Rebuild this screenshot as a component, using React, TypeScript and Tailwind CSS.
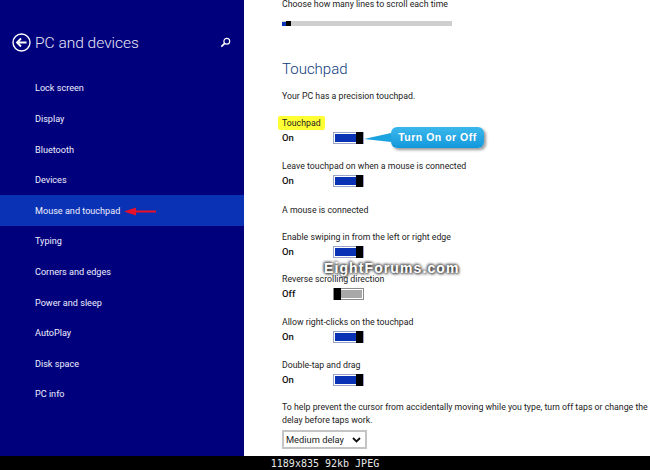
import React from 'react';

const navItems = [
  'Lock screen',
  'Display',
  'Bluetooth',
  'Devices',
  'Mouse and touchpad',
  'Typing',
  'Corners and edges',
  'Power and sleep',
  'AutoPlay',
  'Disk space',
  'PC info',
];

const Toggle: React.FC<{ on: boolean }> = ({ on }) =>
  on ? (
    <div className="flex h-[12px] w-[31px] items-stretch border border-[#9aa3c8] bg-white p-px pr-0">
      <div className="flex-1 bg-[#0a32b4]" />
      <div className="-my-[2px] w-[7px] bg-black" />
    </div>
  ) : (
    <div className="flex h-[12px] w-[31px] items-stretch border border-[#8a8a8a] bg-white p-px pl-0">
      <div className="-my-[2px] w-[7px] bg-black" />
      <div className="flex-1 bg-[#a8a8a8]" />
    </div>
  );

const Setting: React.FC<{ label: React.ReactNode; on: boolean; className: string }> = ({ label, on, className }) => (
  <div className={className}>
    <div className="h-[14px] leading-[14px]">{label}</div>
    <div className="mt-px flex h-[14px] items-center">
      <span className="w-[51px] text-[9.5px] font-medium text-[#111]">{on ? 'On' : 'Off'}</span>
      <Toggle on={on} />
    </div>
  </div>
);

export default function App() {
  return (
    <div className="relative flex h-[470px] w-[650px] flex-col overflow-hidden bg-white font-['Roboto',sans-serif]">
      <div className="flex min-h-0 flex-1">
        <aside className="w-[244px] shrink-0 bg-[#00007c] text-white">
          <div className="flex h-[73px] items-start pl-[12px] pr-[12px] pt-[33px]">
            <svg width="19" height="19" viewBox="0 0 19 19" fill="none" stroke="white" className="shrink-0">
              <circle cx="9.5" cy="9.5" r="8.5" strokeWidth="1.4" />
              <path d="M14.5 9.5H5.5M9 5.5L5 9.5L9 13.5" strokeWidth="1.8" />
            </svg>
            <h1 className="ml-[4px] flex-1 text-[15.5px] font-light leading-[21px] text-[#e8e8f8]">PC and devices</h1>
            <svg width="11" height="11" viewBox="0 0 11 11" fill="none" stroke="white" className="mt-[4px] mr-[1px]">
              <circle cx="6.8" cy="4.2" r="2.9" strokeWidth="1.2" />
              <path d="M4.7 6.3L1.3 9.7" strokeWidth="1.7" />
            </svg>
          </div>
          <nav>
            {navItems.map((item) => (
              <div
                key={item}
                className={`flex h-[30.6px] items-center gap-[4px] pl-[35px] pt-[2px] text-[9.1px] text-[#eef] ${
                  item === 'Mouse and touchpad' ? 'bg-[#0a32b4]' : ''
                }`}
              >
                {item}
                {item === 'Mouse and touchpad' && (
                  <svg width="33" height="9" viewBox="0 0 33 9" className="shrink-0">
                    <path d="M0 4.5L12 0.5V3.5H32V5.5H12V8.5Z" fill="#e8102a" />
                  </svg>
                )}
              </div>
            ))}
          </nav>
        </aside>

        <main className="min-w-0 flex-1 pl-[38px] text-[8.75px] text-[#222]">
          <div className="-mt-[3px] h-[14px] leading-[14px]">Choose how many lines to scroll each time</div>
          <div className="mt-[10px] flex h-[5px] w-[170px] items-center bg-[#cfcfcf]">
            <div className="h-[4px] w-[4px] bg-[#0a32b4]" />
            <div className="h-[5px] w-[5px] bg-black" />
          </div>
          <h2 className="mt-[32px] h-[22px] text-[15px] font-light leading-[22px] text-[#0f3a80]">Touchpad</h2>
          <div className="mt-[9px] h-[14px] leading-[14px]">Your PC has a precision touchpad.</div>
          <Setting
            label={<span className="-ml-[4px] inline-block h-[14px] rounded-[2px] bg-[#ffff33] px-[4px]">Touchpad</span>}
            on
            className="mt-[13px]"
          />
          <Setting label="Leave touchpad on when a mouse is connected" on className="mt-[14px]" />
          <div className="mt-[15px] h-[14px] leading-[14px]">A mouse is connected</div>
          <Setting label="Enable swiping in from the left or right edge" on className="mt-[13px]" />
          <Setting label="Reverse scrolling direction" on={false} className="mt-[13px]" />
          <Setting label="Allow right-clicks on the touchpad" on className="mt-[14px]" />
          <Setting label="Double-tap and drag" on className="mt-[14px]" />
          <p className="mt-[14px] whitespace-nowrap leading-[13px]">
            To help prevent the cursor from accidentally moving while you type, turn off taps or change the
            <br />
            delay before taps work.
          </p>
          <div className="mt-[3px] flex h-[19px] w-[85px] items-center justify-between border-2 border-[#c4c4c4] pl-[2px] pr-[4px] text-[9.3px]">
            <span>Medium delay</span>
            <svg width="9" height="6" viewBox="0 0 9 6" fill="none" stroke="#111" strokeWidth="1.8">
              <path d="M1 1L4.5 4.5L8 1" />
            </svg>
          </div>
        </main>
      </div>

      <footer className="flex h-[14px] shrink-0 items-center justify-center bg-black font-['DejaVu_Sans_Mono',monospace] text-[10px] text-[#e8e8e8]">
        1189x835 92kb JPEG
      </footer>

      {/* callout annotation */}
      <div className="absolute left-[364px] top-[127px] flex items-center">
        <svg width="27" height="10" viewBox="0 0 27 10">
          <path d="M0 6L27 0V9Z" fill="#1ba3e0" />
        </svg>
        <div className="flex h-[21px] w-[93px] items-center justify-center rounded-[6px] bg-gradient-to-b from-[#3ab8ec] to-[#0f98dc] font-['Liberation_Sans',sans-serif] text-[10.5px] font-bold tracking-[0.5px] text-white shadow-[2px_2px_3px_#999]">
          Turn On or Off
        </div>
      </div>

      {/* watermark */}
      <div className="absolute left-[324px] top-[259px] font-['Liberation_Sans',sans-serif] text-[14px] font-bold leading-[18px] tracking-[1.1px] text-white [text-shadow:0_0_3px_#333,1px_1px_3px_#333,-1px_-1px_3px_#555]">
        EightForums.com
      </div>
    </div>
  );
}
